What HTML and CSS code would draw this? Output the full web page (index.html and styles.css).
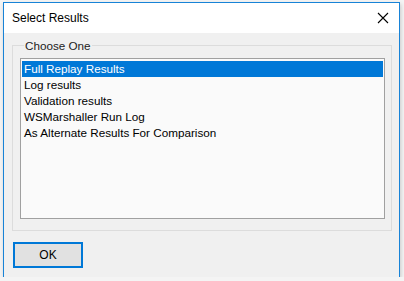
FILE: index.html
```html
<!DOCTYPE html>
<html lang="en">
<head>
  <meta charset="UTF-8" />
  <title>Select Results</title>
  <link rel="stylesheet" href="styles.css">
</head>
<body>
  <div class="dialog">
    <div class="titlebar">
      <span class="title">Select Results</span>
      <svg class="close" width="12" height="12" viewBox="0 0 12 12">
        <path d="M1 1 L11 11 M11 1 L1 11" stroke="#000" stroke-width="1.1" fill="none"/>
      </svg>
    </div>
    <div class="content">
      <fieldset class="group">
        <legend>Choose One</legend>
        <ul class="listbox">
          <li class="selected">Full Replay Results</li>
          <li>Log results</li>
          <li>Validation results</li>
          <li>WSMarshaller Run Log</li>
          <li>As Alternate Results For Comparison</li>
        </ul>
      </fieldset>
      <button class="ok">OK</button>
    </div>
  </div>
</body>
</html>
```

FILE: styles.css
```css
body {
  margin: 0;
  background: #f4f4f4;
  font-family: 'Liberation Sans', Arial, sans-serif;
  font-size: 12px;
  color: #000;
}
.dialog {
  margin: 2px 0 0 3px;
  width: 395px;
  height: 274px;
  border: 1px solid #1883d7;
  border-bottom: none;
  background: #f0f0f0;
  box-shadow: 1px 2px 4px rgba(0, 0, 0, 0.18);
  display: flex;
  flex-direction: column;
}
.titlebar {
  height: 30px;
  background: #fff;
  display: flex;
  align-items: center;
  justify-content: space-between;
  padding: 0 10px 0 8px;
}
.title {
  font-size: 12px;
}
.content {
  flex: 1;
  padding: 6px 0 0 8px;
  display: flex;
  flex-direction: column;
  align-items: flex-start;
}
.group {
  margin: 0;
  width: 365px;
  border: 1px solid #dcdcdc;
  padding: 6px 6px 11px 7px;
}
.group legend {
  padding: 0 1px;
  margin-left: 4px;
  color: #222;
  font-size: 11.7px;
}
.listbox {
  list-style: none;
  margin: 0;
  padding: 2px 1px 1px;
  height: 156px;
  border: 1px solid #a0a0a0;
  background: #fafafa;
  font-size: 11.7px;
}
.listbox li {
  height: 16px;
  line-height: 16px;
  padding-left: 2px;
}
.listbox li.selected {
  background: #0078d7;
  color: #fff;
}
.ok {
  margin-top: 11px;
  margin-left: 1px;
  width: 70px;
  height: 26px;
  background: #e1e1e1;
  border: 2px solid #0078d7;
  font-family: inherit;
  font-size: 12px;
  color: #000;
  padding: 0;
}
```
